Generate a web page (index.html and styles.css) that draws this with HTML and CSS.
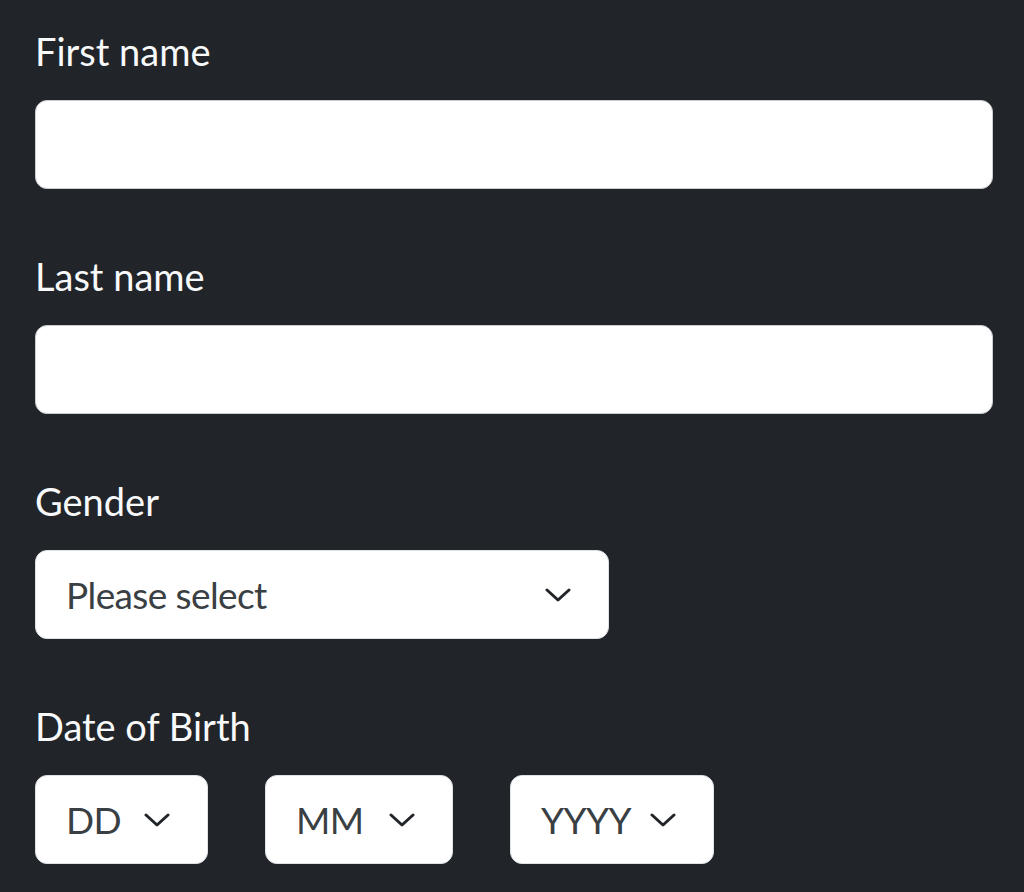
FILE: index.html
```html
<!DOCTYPE html>
<html lang="en">
<head>
<meta charset="utf-8">
<title>Form</title>
<link rel="stylesheet" href="styles.css">
</head>
<body>
<form class="form">
  <div class="field">
    <label class="label" for="first">First name</label>
    <input class="input" id="first" type="text">
  </div>
  <div class="field">
    <label class="label" for="last">Last name</label>
    <input class="input" id="last" type="text">
  </div>
  <div class="field">
    <div class="label">Gender</div>
    <div class="select select-gender">
      <span class="select-text">Please select</span>
      <svg class="chev" viewBox="0 0 26 14" width="26" height="14"><path d="M2 2 L13 12 L24 2" fill="none" stroke="#212529" stroke-width="3" stroke-linecap="round" stroke-linejoin="round"/></svg>
    </div>
  </div>
  <div class="field">
    <div class="label">Date of Birth</div>
    <div class="dob">
      <div class="select select-dd">
        <span class="select-text">DD</span>
        <svg class="chev" viewBox="0 0 26 14" width="26" height="14"><path d="M2 2 L13 12 L24 2" fill="none" stroke="#212529" stroke-width="3" stroke-linecap="round" stroke-linejoin="round"/></svg>
      </div>
      <div class="select select-mm">
        <span class="select-text">MM</span>
        <svg class="chev" viewBox="0 0 26 14" width="26" height="14"><path d="M2 2 L13 12 L24 2" fill="none" stroke="#212529" stroke-width="3" stroke-linecap="round" stroke-linejoin="round"/></svg>
      </div>
      <div class="select select-yyyy">
        <span class="select-text">YYYY</span>
        <svg class="chev" viewBox="0 0 26 14" width="26" height="14"><path d="M2 2 L13 12 L24 2" fill="none" stroke="#212529" stroke-width="3" stroke-linecap="round" stroke-linejoin="round"/></svg>
      </div>
    </div>
  </div>
</form>
</body>
</html>
```
FILE: styles.css
```css
html, body {
  margin: 0;
  padding: 0;
  background: #212529;
}
body {
  font-family: Lato, "Noto Sans", "Open Sans", sans-serif;
  font-size: 38px;
  line-height: 58px;
  color: #f8f9fa;
  width: 1024px;
  height: 892px;
  overflow: hidden;
}
.form {
  padding: 22px 31px 0 35px;
}
.field {
  margin-bottom: 58px;
}
.label {
  display: block;
  margin-bottom: 20px;
  color: #f8f9fa;
}
.input {
  display: block;
  box-sizing: border-box;
  width: 100%;
  height: 89px;
  margin: 0;
  border: 1px solid #c9cdd1;
  border-radius: 12px;
  background: #ffffff;
  font: inherit;
  padding: 0 30px;
  outline: none;
}
.select {
  box-sizing: border-box;
  height: 89px;
  display: flex;
  align-items: center;
  justify-content: space-between;
  background: #ffffff;
  border: 1px solid #dee2e6;
  border-radius: 12px;
  padding: 0 37px 0 30px;
  color: #3a3f44;
}
.select-text {
  white-space: nowrap;
  font-size: 37px;
  letter-spacing: -0.6px;
}
.chev {
  display: block;
  flex: none;
}
.select-gender {
  width: 574px;
}
.dob {
  display: flex;
  gap: 57px;
}
.select-dd {
  width: 173px;
}
.select-mm {
  width: 188px;
}
.select-yyyy {
  width: 204px;
}
```
